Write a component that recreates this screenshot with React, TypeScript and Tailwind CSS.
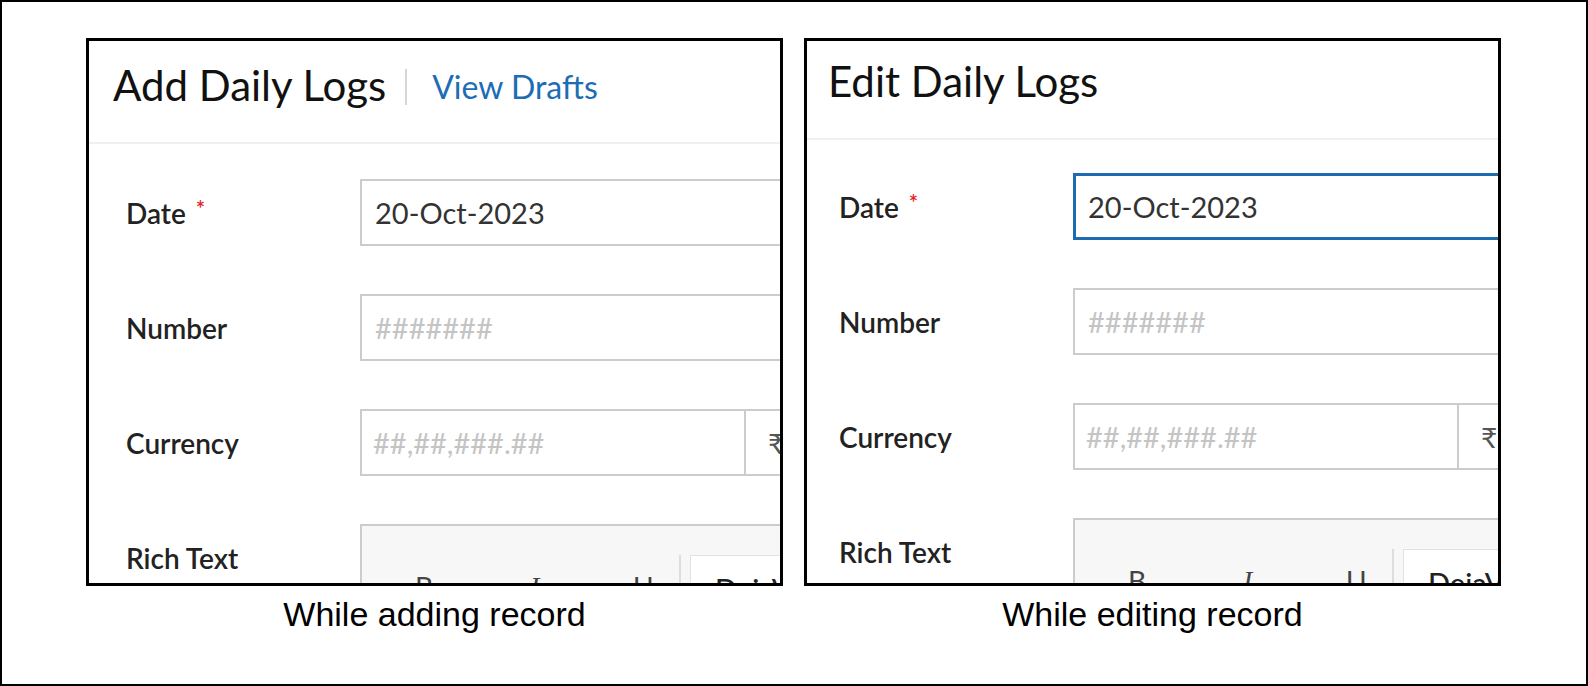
import React from 'react';

interface PanelProps {
  edit?: boolean;
}

const Label: React.FC<{ text: string; required?: boolean }> = ({ text, required }) => (
  <div className="w-[234px] shrink-0 flex items-center text-[28px] font-semibold text-[#222]">
    <span>{text}</span>
    {required && <span className="ml-[10px] -mt-[8px] text-[22px] text-[#e02424]">*</span>}
  </div>
);

const Panel: React.FC<PanelProps> = ({ edit }) => {
  const inputBorder = edit ? 'border-[3px] border-[#1d6cb1] pl-[12px]' : 'border-2 border-[#cccccc] pl-[13px]';

  return (
    <div className="w-[697px] h-[548px] border-[3px] border-black bg-white overflow-hidden font-[family-name:Lato,sans-serif]">
      {/* Header */}
      <div
        className={
          edit
            ? 'h-[99px] pl-[21px] pb-[18px] flex items-center border-b-2 border-[#f0f0f0]'
            : 'h-[103px] pl-[24px] pb-[14px] flex items-center border-b-2 border-[#f0f0f0]'
        }
      >
        <h2 className="text-[42px] leading-none text-[#111] whitespace-nowrap">
          {edit ? 'Edit Daily Logs' : 'Add Daily Logs'}
        </h2>
        {!edit && (
          <>
            <span className="w-[2px] h-[36px] bg-[#d6d6d6] ml-[19px] mr-[25px] mt-[4px]" />
            <a className="text-[32px] leading-none text-[#1c6db5] mt-[4px] whitespace-nowrap">View Drafts</a>
          </>
        )}
      </div>

      {/* Form */}
      <div className={edit ? 'pt-[33px] pl-[32px]' : 'pt-[35px] pl-[37px]'}>
        <div className="flex h-[67px] mb-[48px]">
          <Label text="Date" required />
          <div className={`w-[600px] shrink-0 h-full ${inputBorder} flex items-center text-[29px] text-[#333]`}>
            20-Oct-2023
          </div>
        </div>

        <div className="flex h-[67px] mb-[48px]">
          <Label text="Number" />
          <div className="w-[600px] shrink-0 h-full border-2 border-[#cccccc] flex items-center pl-[13px] text-[29px] text-[#c4c4c4]">
            #######
          </div>
        </div>

        <div className="flex h-[67px] mb-[48px]">
          <Label text="Currency" />
          <div className="w-[600px] shrink-0 h-full border-2 border-[#cccccc] flex">
            <div className="w-[384px] shrink-0 border-r-2 border-[#cccccc] flex items-center pl-[11px] text-[29px] text-[#c4c4c4]">
              ##,##,###.##
            </div>
            <div className="flex items-center pl-[22px] text-[28px] text-[#555]">₹</div>
          </div>
        </div>

        <div className="flex h-[67px]">
          <Label text="Rich Text" />
          <div className="w-[600px] shrink-0 h-[140px] border-2 border-[#cccccc] bg-[#f7f7f7] pt-[29px] flex">
            <div className="w-[317px] shrink-0 flex pt-[18px] text-[28px] leading-none text-[#444]">
              <span className="w-[168px] shrink-0 pl-[53px]">B</span>
              <span className="w-[103px] shrink-0 font-[family-name:'Liberation_Serif',serif] italic">I</span>
              <span className="w-[46px] shrink-0">U</span>
            </div>
            <span className="w-[2px] h-[90px] bg-[#dddddd]" />
            <div className="ml-[9px] h-[90px] flex-1 bg-white border border-[#e2e2e2] pl-[24px] pt-[18px] text-[29px] leading-none font-medium text-[#222] whitespace-nowrap">
              DejaVu Sans
            </div>
          </div>
        </div>
      </div>
    </div>
  );
};

export default function App() {
  return (
    <div className="w-[1588px] h-[686px] border-2 border-black bg-white pt-[36px] pl-[84px] flex gap-[21px]">
      <div className="flex flex-col items-center">
        <Panel />
        <p className="mt-[10px] text-[34px] leading-[36px] text-black font-[family-name:'Liberation_Sans',Arial,sans-serif]">
          While adding record
        </p>
      </div>
      <div className="flex flex-col items-center">
        <Panel edit />
        <p className="mt-[10px] text-[34px] leading-[36px] text-black font-[family-name:'Liberation_Sans',Arial,sans-serif]">
          While editing record
        </p>
      </div>
    </div>
  );
}
